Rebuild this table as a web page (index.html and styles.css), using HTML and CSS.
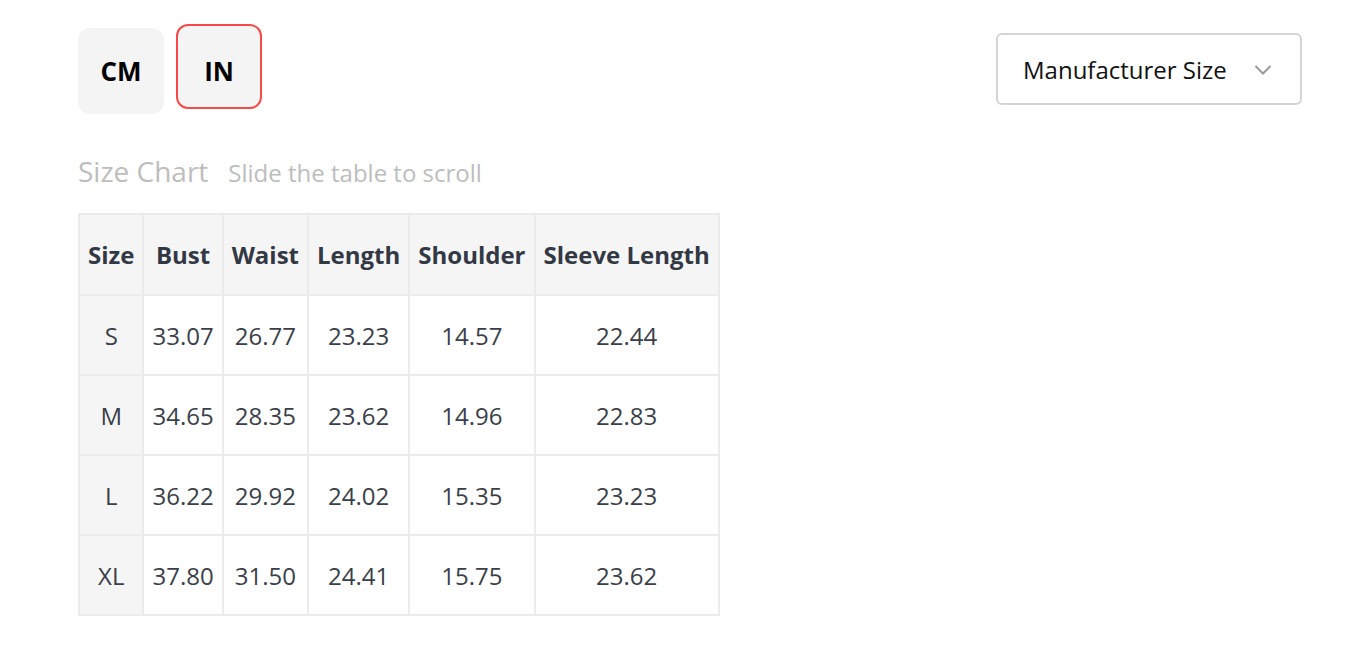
FILE: index.html
```html
<!DOCTYPE html>
<html>
<head>
<meta charset="utf-8">
<link rel="stylesheet" href="styles.css">
</head>
<body>
<div class="page">
  <div class="topbar">
    <div class="units">
      <button class="unit">CM</button>
      <button class="unit active">IN</button>
    </div>
    <div class="select">
      <span>Manufacturer Size</span>
      <svg class="chev" width="18" height="10" viewBox="0 0 18 10"><path d="M1.5 1 L9 8.5 L16.5 1" fill="none" stroke="#9a9a9a" stroke-width="2"/></svg>
    </div>
  </div>
  <div class="title">
    <span class="t1">Size Chart</span>
    <span class="t2">Slide the table to scroll</span>
  </div>
  <table class="chart">
    <thead>
      <tr><th>Size</th><th>Bust</th><th>Waist</th><th>Length</th><th>Shoulder</th><th>Sleeve Length</th></tr>
    </thead>
    <tbody>
      <tr><td class="sz">S</td><td>33.07</td><td>26.77</td><td>23.23</td><td>14.57</td><td>22.44</td></tr>
      <tr><td class="sz">M</td><td>34.65</td><td>28.35</td><td>23.62</td><td>14.96</td><td>22.83</td></tr>
      <tr><td class="sz">L</td><td>36.22</td><td>29.92</td><td>24.02</td><td>15.35</td><td>23.23</td></tr>
      <tr><td class="sz">XL</td><td>37.80</td><td>31.50</td><td>24.41</td><td>15.75</td><td>23.62</td></tr>
    </tbody>
  </table>
</div>
</body>
</html>
```

FILE: styles.css
```css
* { box-sizing: border-box; }
html, body { margin: 0; padding: 0; background: #fff; }
body { font-family: "Open Sans", "Liberation Sans", sans-serif; color: #343a46; }
.page { padding: 24px 58px 0 78px; }
.topbar { display: flex; justify-content: space-between; align-items: flex-start; }
.units { display: flex; gap: 12px; align-items: flex-start; }
.unit {
  width: 86px; height: 86px; border-radius: 12px; border: 2px solid #f4f4f4;
  background: #f4f4f4; font-family: "Open Sans", sans-serif; font-weight: 700;
  font-size: 26px; color: #000; margin-top: 4px; padding: 0; cursor: pointer;
  line-height: 1;
}
.unit.active { border-color: #f44a4a; margin-top: 0; height: 85px; padding-top: 8px; }
.select {
  margin-top: 9px; width: 306px; height: 72px; border: 2px solid #d4d4d4; border-radius: 6px;
  display: flex; align-items: center; justify-content: space-between; padding: 0 28px 0 25px;
  font-size: 24px; color: #111;
}
.chev { display: block; margin-top: 2px; }
.title { margin-top: 39px; display: flex; align-items: baseline; gap: 20px; color: #bdbdbd; line-height: 1.3; }
.t1 { font-size: 28px; }
.t2 { font-size: 24px; }
.chart { margin-top: 24px; border-collapse: collapse; font-size: 24px; }
.chart th, .chart td { border: 2px solid #ebebeb; text-align: center; padding: 0 8px; height: 80px; }
.chart th { background: #f5f5f5; font-weight: 700; height: 81px; color: #333845; }
.chart td { color: #3a3f4a; }
.chart td.sz { background: #f5f5f5; }
```
